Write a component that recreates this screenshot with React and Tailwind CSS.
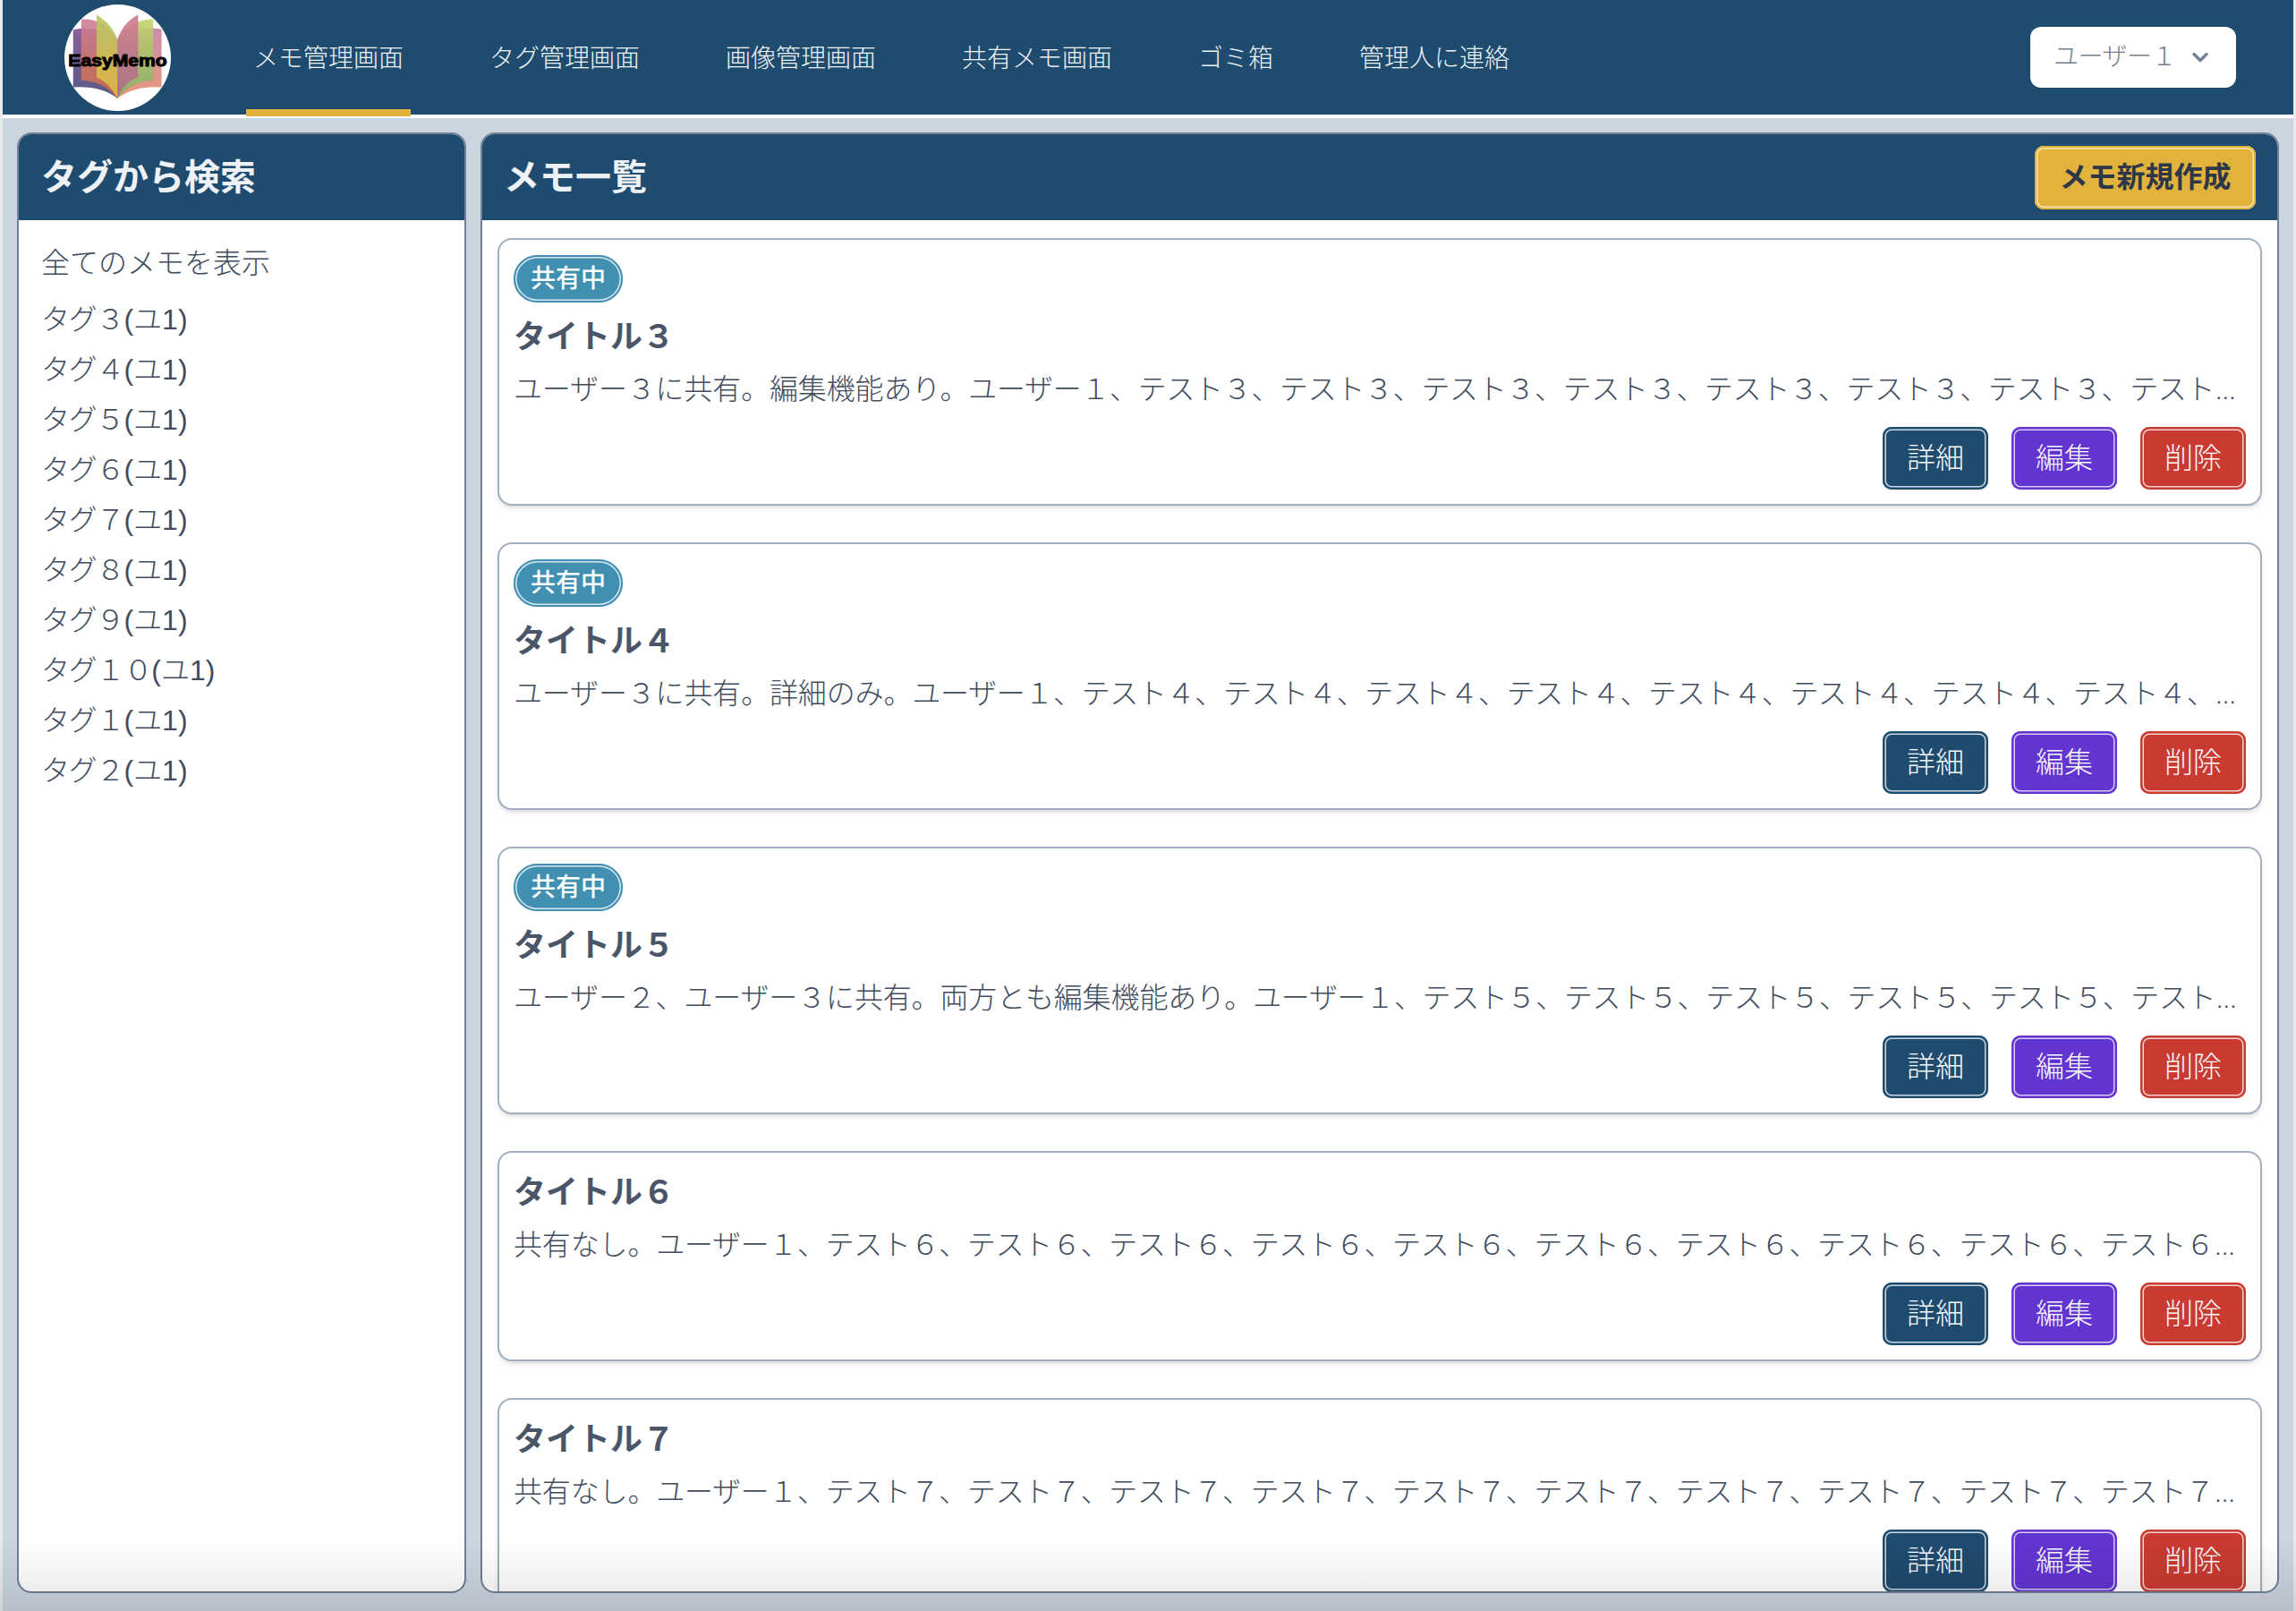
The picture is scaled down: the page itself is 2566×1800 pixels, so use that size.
import { ChevronDown } from 'lucide-react';

const navItems = ['メモ管理画面', 'タグ管理画面', '画像管理画面', '共有メモ画面', 'ゴミ箱', '管理人に連絡'];
const tags = ['３', '４', '５', '６', '７', '８', '９', '１０', '１', '２'];

const repeat = (n, count) => 'ユーザー１、' + `テスト${n}、`.repeat(count);
const memos = [
  { n: '３', shared: true, head: 'ユーザー３に共有。編集機能あり。', text: repeat('３', 10) },
  { n: '４', shared: true, head: 'ユーザー３に共有。詳細のみ。', text: repeat('４', 10) },
  { n: '５', shared: true, head: 'ユーザー２、ユーザー３に共有。両方とも編集機能あり。', text: repeat('５', 10) },
  { n: '６', shared: false, head: '共有なし。', text: repeat('６', 12) },
  { n: '７', shared: false, head: '共有なし。', text: repeat('７', 12) },
];

function Logo() {
  return (
    <svg viewBox="67 13 354 354" className="w-[119px] h-[119px] shrink-0">
      <defs>
        <linearGradient id="l1" x1="0" y1="0" x2="0" y2="1"><stop offset="0" stopColor="#7d4f8e" /><stop offset="1" stopColor="#46487a" /></linearGradient>
        <linearGradient id="l2" x1="0" y1="0" x2="0" y2="1"><stop offset="0" stopColor="#cb7f9a" /><stop offset="1" stopColor="#cf6c42" /></linearGradient>
        <linearGradient id="l3" x1="0" y1="0" x2="0" y2="1"><stop offset="0" stopColor="#b4c766" /><stop offset="1" stopColor="#e6b842" /></linearGradient>
        <linearGradient id="r1" x1="0" y1="0" x2="0" y2="1"><stop offset="0" stopColor="#c67fa6" /><stop offset="1" stopColor="#e88c6e" /></linearGradient>
        <linearGradient id="r2" x1="0" y1="0" x2="0" y2="1"><stop offset="0" stopColor="#c4d26c" /><stop offset="1" stopColor="#84b068" /></linearGradient>
        <linearGradient id="r3" x1="0" y1="0" x2="0" y2="1"><stop offset="0" stopColor="#d07c8e" /><stop offset="1" stopColor="#ab6e8a" /></linearGradient>
      </defs>
      <circle cx="244" cy="190" r="177" fill="#fff" />
      <g fillOpacity="0.9">
        <path d="M96 97 Q180 80 243 130 L243 325 Q190 282 96 288 Z" fill="url(#l1)" />
        <path d="M123 62 Q205 58 243 130 L243 325 Q200 268 123 265 Z" fill="url(#l2)" />
        <path d="M174 47 Q228 80 243 130 L243 325 Q218 275 174 255 Z" fill="url(#l3)" />
        <path d="M390 95 Q310 80 243 130 L243 325 Q300 282 390 288 Z" fill="url(#r1)" />
        <path d="M362 62 Q285 62 243 130 L243 325 Q290 268 362 265 Z" fill="url(#r2)" />
        <path d="M312 47 Q262 72 243 130 L243 325 Q265 272 312 255 Z" fill="url(#r3)" />
      </g>
      <text x="80" y="219" textLength="328" lengthAdjust="spacingAndGlyphs" fontFamily="'Liberation Sans', sans-serif" fontWeight="700" fontSize="56" fill="#000" stroke="#000" strokeWidth="3">EasyMemo</text>
    </svg>
  );
}

function ActionButton({ label, className }) {
  return (
    <button className={`w-[118px] h-[70px] rounded-[10px] text-[32px] font-light text-[#f7fafc] ${className}`}>
      {label}
    </button>
  );
}

function MemoCard({ memo }) {
  return (
    <div className={`shrink-0 bg-white border-2 border-[#a0aec0] rounded-[16px] shadow-md px-[16px] pb-[16px] ${memo.shared ? 'pt-[17px]' : 'pt-[16px]'}`}>
      {memo.shared && (
        <span className="flex items-center justify-center w-[122px] h-[53px] mb-[10px] rounded-full bg-[#4190b2] text-[28px] leading-none font-medium text-white shadow-[inset_0_0_0_2px_#4190b2,inset_0_0_0_3.5px_#d5e6ee]">
          共有中
        </span>
      )}
      <h3 className="pt-[2px] text-[36px] leading-[54px] font-semibold text-[#4a5568]">タイトル{memo.n}</h3>
      {/* smaller size on the p keeps the ellipsis as narrow as in the original */}
      <p className="mt-[10px] text-[24px] leading-[48px] font-light text-[#414c5e] truncate">
        <span className="text-[32px] leading-none tracking-[-0.15px]">{memo.head}</span>
        <span className="text-[32px] leading-none tracking-[-0.33px]">{memo.text}</span>
      </p>
      <div className="mt-[15px] flex justify-end gap-[26px]">
        <ActionButton label="詳細" className="bg-[#1f4b6e] shadow-[inset_0_0_0_2.5px_#1f4b6e,inset_0_0_0_4px_#cbd5e0]" />
        <ActionButton label="編集" className="bg-[#6234d0] shadow-[inset_0_0_0_2.5px_#6234d0,inset_0_0_0_4px_#d6c9f2]" />
        <ActionButton label="削除" className="bg-[#c93a31] shadow-[inset_0_0_0_2.5px_#c93a31,inset_0_0_0_4px_#f2d2cf]" />
      </div>
    </div>
  );
}

export default function App() {
  return (
    <div className="relative h-screen bg-[#e8eaee] px-[3px] font-['Liberation_Sans','Noto_Sans_CJK_JP',sans-serif]">
      <div className="h-full flex flex-col bg-[#cbd5e0]">
        <header className="h-[132px] shrink-0 flex items-center bg-[#1f4b6e] border-b-4 border-white pl-[69px] pr-[64px]">
          <Logo />
          <nav className="h-full flex gap-[80px] ml-[84px]">
            {navItems.map((item, i) => (
              <a
                key={item}
                className={`relative w-fit px-[8px] flex items-center pt-[3px] text-[28px] font-light text-[#edf2f7] ${i === 0 ? "after:absolute after:left-0 after:right-0 after:-bottom-[2px] after:h-[8px] after:bg-[#e2b33c]" : ''}`}
              >
                {item}
              </a>
            ))}
          </nav>
          <button className="ml-auto w-[230px] h-[68px] flex items-center justify-between px-[26px] bg-white rounded-[12px] text-[28px] font-light text-[#718096]">
            <span className="tracking-[-0.5px]">ユーザー１</span>
            <ChevronDown size={28} strokeWidth={3} />
          </button>
        </header>

        <main className="flex-1 min-h-0 flex gap-[16px] pt-[16px] pb-[20px] pl-[16px] pr-[16px]">
          <aside className="w-[502px] shrink-0 flex flex-col border-2 border-[#718096] rounded-[16px] bg-white overflow-hidden">
            <div className="h-[96px] shrink-0 flex items-center px-[25px] bg-[#1f4b6e]">
              <h2 className="text-[40px] font-semibold text-[#edf2f7]">タグから検索</h2>
            </div>
            <ul className="pt-[24px] px-[25px] text-[32px] leading-[48px] font-light text-[#414c5e]">
              <li className="mb-[15px]">全てのメモを表示</li>
              {tags.map((t) => (
                <li key={t} className="mb-[8px]"><span className="tracking-[-1.2px]">タグ{t}</span>(ユ1)</li>
              ))}
            </ul>
          </aside>

          <section className="flex-1 min-w-0 flex flex-col border-2 border-[#718096] rounded-[16px] bg-white overflow-hidden">
            <div className="h-[96px] shrink-0 flex items-center justify-between pl-[24px] pr-[24px] bg-[#1f4b6e]">
              <h2 className="text-[40px] font-semibold text-[#edf2f7]">メモ一覧</h2>
              <button className="w-[247px] h-[71px] rounded-[10px] bg-[#e2b33c] text-[32px] font-semibold text-[#2d3748] shadow-[inset_0_0_0_2px_#e2b33c,inset_0_0_0_3.5px_#f3e3b5]">
                メモ新規作成
              </button>
            </div>
            <div className="flex-1 min-h-0 overflow-hidden flex flex-col gap-[41px] pt-[20px] pl-[17px] pr-[17px]">
              {memos.map((memo) => (
                <MemoCard key={memo.n} memo={memo} />
              ))}
            </div>
          </section>
        </main>
      </div>
      <div className="absolute inset-x-0 bottom-0 h-[80px] bg-linear-to-t from-black/10 to-transparent pointer-events-none" />
    </div>
  );
}
